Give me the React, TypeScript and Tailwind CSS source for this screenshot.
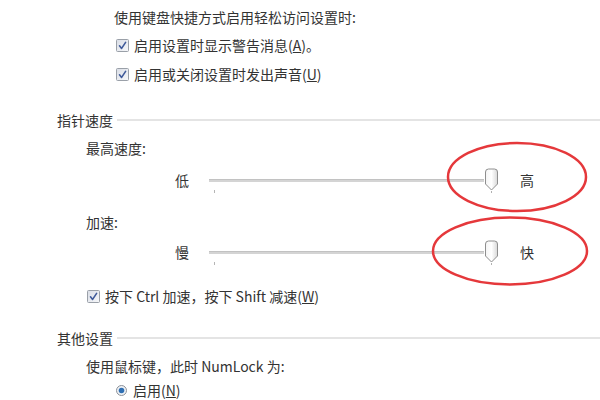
import React from "react";

const font = { fontFamily: '"Noto Sans CJK SC", "Noto Sans", sans-serif' };

function Check() {
  return (
    <svg width="13" height="13" viewBox="0 0 13 13" className="shrink-0">
      <defs>
        <linearGradient id="cbg" x1="0" y1="0" x2="1" y2="1">
          <stop offset="0" stopColor="#d9dde6" />
          <stop offset="1" stopColor="#f7f8fa" />
        </linearGradient>
      </defs>
      <rect x="0.5" y="0.5" width="12" height="12" rx="1" fill="url(#cbg)" stroke="#9aa0a8" />
      <path d="M3.5 6.8 L5.6 9.4 L9.6 3.4" fill="none" stroke="#3f5a9a" strokeWidth="1.6" strokeLinecap="round" strokeLinejoin="round" />
    </svg>
  );
}

function Thumb() {
  return (
    <svg width="15" height="25" viewBox="0 0 15 25" className="shrink-0">
      <defs>
        <linearGradient id="thg" x1="0" y1="0" x2="1" y2="0">
          <stop offset="0" stopColor="#f4f4f4" />
          <stop offset="0.5" stopColor="#ffffff" />
          <stop offset="1" stopColor="#d8d8d8" />
        </linearGradient>
      </defs>
      <path d="M1.5 4 Q1.5 1 4.5 1 H10.5 Q13.5 1 13.5 4 V16 L7.5 22 L1.5 16 Z" fill="url(#thg)" stroke="#8e8e8e" strokeWidth="1" />
      <line x1="7.5" y1="23" x2="7.5" y2="25" stroke="#b0b0b0" strokeWidth="1" />
    </svg>
  );
}

function Slider({ lo, hi }: { lo: string; hi: string }) {
  return (
    <div className="flex items-center h-[28px]">
      <span className="w-[175px]" />
      <span className="w-[34px] text-[14px] text-[#333]">{lo}</span>
      <div className="relative w-[275px] h-[28px] flex items-center">
        <div className="w-full h-[3px] bg-[#d4d4d4] border-t border-[#c2c2c2]" />
        <div className="absolute left-[5px] top-[24px] w-[1px] h-[3px] bg-[#b5b5b5]" />
      </div>
      <Thumb />
      <span className="ml-[21px] text-[14px] text-[#333]">{hi}</span>
    </div>
  );
}

function SectionHead({ title }: { title: string }) {
  return (
    <div className="flex items-center h-[22px] pl-[57px]">
      <span className="text-[14px] text-[#333]">{title}</span>
      <div className="flex-1 ml-[4px] h-[2px] bg-[#e4e4e4]" />
    </div>
  );
}

export default function App() {
  return (
    <div className="relative w-[600px] h-[400px] bg-white overflow-hidden text-[#333] leading-none" style={font}>
      <div className="flex items-center h-[34px] pl-[114px] text-[14px]">使用键盘快捷方式启用轻松访问设置时:</div>
      <div className="flex items-center h-[22px] pl-[116px] gap-[5px] text-[14px]">
        <Check />
        <span>启用设置时显示警告消息(<u>A</u>)。</span>
      </div>
      <div className="flex items-center h-[36px] pl-[116px] gap-[5px] text-[14px]">
        <Check />
        <span>启用或关闭设置时发出声音(<u>U</u>)</span>
      </div>
      <div className="h-[17px]" />
      <SectionHead title="指针速度" />
      <div className="h-[6px]" />
      <div className="flex items-center h-[22px] pl-[86px] text-[14px]">最高速度:</div>
      <div className="h-[7px]" />
      <Slider lo="低" hi="高" />
      <div className="h-[17px]" />
      <div className="flex items-center h-[22px] pl-[86px] text-[14px]">加速:</div>
      <div className="h-[5px]" />
      <Slider lo="慢" hi="快" />
      <div className="h-[19px]" />
      <div className="flex items-center h-[22px] pl-[87px] gap-[5px] text-[14px]">
        <Check />
        <span>按下 Ctrl 加速，按下 Shift 减速(<u>W</u>)</span>
      </div>
      <div className="h-[20px]" />
      <SectionHead title="其他设置" />
      <div className="h-[6px]" />
      <div className="flex items-center h-[22px] pl-[86px] text-[14px]">使用鼠标键，此时 NumLock 为:</div>
      <div className="h-[2px]" />
      <div className="flex items-center h-[22px] pl-[116px] gap-[6px] text-[14px]">
        <svg width="11" height="11" viewBox="0 0 11 11" className="shrink-0">
          <circle cx="5.5" cy="5.5" r="5" fill="#eef1f5" stroke="#8c9198" />
          <circle cx="5.5" cy="5.5" r="2.8" fill="#2f6fb3" />
        </svg>
        <span>启用(<u>N</u>)</span>
      </div>
      <svg className="absolute left-0 top-0 pointer-events-none" width="600" height="400">
        <ellipse cx="517" cy="177" rx="69" ry="34" fill="none" stroke="#e5383b" strokeWidth="2.5" />
        <ellipse cx="510" cy="251" rx="77" ry="33.5" fill="none" stroke="#e5383b" strokeWidth="2.5" />
      </svg>
    </div>
  );
}
